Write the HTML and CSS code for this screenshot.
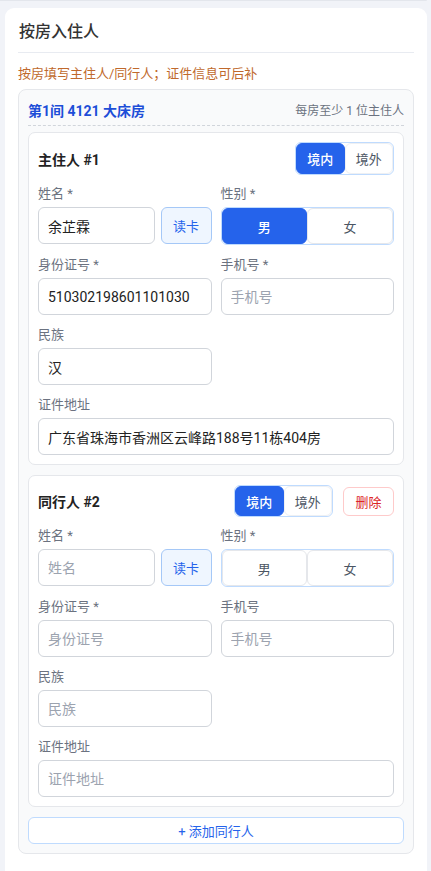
FILE: index.html
```html
<!DOCTYPE html>
<html lang="zh-CN">
<head>
<meta charset="utf-8">
<title>按房入住人</title>
<link rel="stylesheet" href="styles.css">
</head>
<body>
<div class="prev-edge"></div>
<section class="panel">
  <h2 class="panel-title">按房入住人</h2>
  <p class="note">按房填写主住人/同行人；证件信息可后补</p>

  <div class="room">
    <div class="room-head">
      <span class="room-name">第1间 4121 大床房</span>
      <span class="room-hint">每房至少 1 位主住人</span>
    </div>

    <div class="guest">
      <div class="guest-head">
        <span class="guest-title">主住人 #1</span>
        <div class="head-actions">
          <div class="seg seg-sm">
            <button class="seg-btn active">境内</button>
            <button class="seg-btn">境外</button>
          </div>
        </div>
      </div>
      <div class="grid">
        <div class="field">
          <label class="label">姓名 *</label>
          <div class="name-row">
            <input class="input" value="余芷霖">
            <button class="read-btn">读卡</button>
          </div>
        </div>
        <div class="field">
          <label class="label">性别 *</label>
          <div class="seg seg-lg">
            <button class="seg-btn active">男</button>
            <button class="seg-btn">女</button>
          </div>
        </div>
        <div class="field">
          <label class="label">身份证号 *</label>
          <input class="input" value="510302198601101030">
        </div>
        <div class="field">
          <label class="label">手机号 *</label>
          <input class="input" placeholder="手机号">
        </div>
        <div class="field">
          <label class="label">民族</label>
          <input class="input" value="汉">
        </div>
        <div class="field"></div>
        <div class="field span2">
          <label class="label">证件地址</label>
          <input class="input" value="广东省珠海市香洲区云峰路188号11栋404房">
        </div>
      </div>
    </div>

    <div class="guest">
      <div class="guest-head compact">
        <span class="guest-title">同行人 #2</span>
        <div class="head-actions">
          <div class="seg seg-sm">
            <button class="seg-btn active">境内</button>
            <button class="seg-btn">境外</button>
          </div>
          <button class="del-btn">删除</button>
        </div>
      </div>
      <div class="grid">
        <div class="field">
          <label class="label">姓名 *</label>
          <div class="name-row">
            <input class="input" placeholder="姓名">
            <button class="read-btn">读卡</button>
          </div>
        </div>
        <div class="field">
          <label class="label">性别 *</label>
          <div class="seg seg-lg">
            <button class="seg-btn">男</button>
            <button class="seg-btn">女</button>
          </div>
        </div>
        <div class="field">
          <label class="label">身份证号 *</label>
          <input class="input" placeholder="身份证号">
        </div>
        <div class="field">
          <label class="label">手机号</label>
          <input class="input" placeholder="手机号">
        </div>
        <div class="field">
          <label class="label">民族</label>
          <input class="input" placeholder="民族">
        </div>
        <div class="field"></div>
        <div class="field span2">
          <label class="label">证件地址</label>
          <input class="input" placeholder="证件地址">
        </div>
      </div>
    </div>

    <button class="add-btn">+ 添加同行人</button>
  </div>
</section>
</body>
</html>
```
FILE: styles.css
```css
* { box-sizing: border-box; }
html, body { margin: 0; }
body {
  background: #f1f3f8;
  font-family: Roboto, "Noto Sans CJK SC", sans-serif;
  color: #1f2937;
  padding: 0 4px 0 5px;
  height: 871px;
  overflow: hidden;
}
.prev-edge {
  height: 1px;
  margin-left: -5px;
  background: #e3e6ec;
  border-radius: 0 0 8px 0;
}
.panel {
  margin-top: 7px;
  background: #fff;
  border-radius: 9px;
  padding: 12px 13px 20px;
  min-height: 900px;
}
.panel-title {
  margin: 0;
  font-size: 16px;
  line-height: 24px;
  font-weight: 500;
  color: #333;
  padding: 0 0 8px 1px;
  border-bottom: 1px solid #e8ebf1;
}
.note {
  margin: 12px 0 6px;
  font-size: 13px;
  line-height: 18px;
  color: #c0692c;
}
.room {
  background: #f9fafb;
  border: 1px solid #e5e7eb;
  border-radius: 8px;
  padding: 11px 9px 9px;
}
.room-head {
  display: flex;
  justify-content: space-between;
  align-items: center;
  height: 25px;
  padding-bottom: 5px;
  border-bottom: 1px dashed #d1d5db;
  margin-bottom: 6px;
}
.room-name {
  font-size: 14px;
  font-weight: 700;
  color: #1d4ed8;
  line-height: 20px;
}
.room-hint {
  font-size: 12px;
  color: #6b7280;
  line-height: 20px;
}
.guest {
  background: #fff;
  border: 1px solid #e5e7eb;
  border-radius: 7px;
  padding: 9px;
  margin-bottom: 10px;
}
.guest-head {
  display: flex;
  justify-content: space-between;
  align-items: center;
  height: 33px;
  margin-bottom: 10px;
}
.guest-head.compact { height: 32px; }
.guest-title {
  font-size: 14px;
  font-weight: 700;
  color: #222;
}
.head-actions {
  display: flex;
  align-items: center;
  gap: 10px;
}
.seg {
  display: grid;
  grid-template-columns: 1fr 1fr;
  border: 1px solid #bfdbfe;
  border-radius: 6px;
  background: #fff;
}
.seg-sm { width: 99px; height: 33px; }
.compact .seg-sm { height: 32px; }
.seg-lg { height: 38px; }
.seg-btn {
  font-family: inherit;
  font-size: 13px;
  color: #4b5563;
  background: #fff;
  border: 1px solid #e5e7eb;
  border-radius: 6px;
  margin: 0;
  padding: 0;
  cursor: pointer;
}
.seg-sm .seg-btn { border-color: #eef0f3; }
.seg-btn.active {
  background: #2563eb;
  border-color: #2563eb;
  color: #fff;
  font-weight: 500;
}
.del-btn {
  font-family: inherit;
  width: 51px;
  height: 29px;
  font-size: 13px;
  color: #dc2626;
  background: #fff;
  border: 1px solid #fecaca;
  border-radius: 6px;
  padding: 0;
}
.grid {
  display: grid;
  grid-template-columns: 1fr 1fr;
  column-gap: 9px;
  row-gap: 11px;
  align-items: start;
}
.span2 { grid-column: 1 / span 2; }
.field {
  display: flex;
  flex-direction: column;
  gap: 4px;
}
.label {
  font-size: 13px;
  line-height: 18px;
  color: #6b7280;
}
.input {
  height: 37px;
  width: 100%;
  border: 1px solid #d1d5db;
  border-radius: 6px;
  padding: 0 9px;
  font-family: inherit;
  font-size: 14px;
  color: #222;
  background: #fff;
  outline: none;
}
.input::placeholder { color: #9ca3af; }
.name-row {
  display: flex;
  gap: 6px;
}
.name-row .input { flex: 1; min-width: 0; }
.read-btn {
  flex: 0 0 51px;
  height: 37px;
  font-family: inherit;
  font-size: 13px;
  color: #2563eb;
  background: #eff6ff;
  border: 1px solid #a5c8f7;
  border-radius: 6px;
  padding: 0;
}
.add-btn {
  display: block;
  width: 100%;
  height: 27px;
  margin: 0;
  font-family: inherit;
  font-size: 13px;
  color: #2563eb;
  background: #fff;
  border: 1px solid #bfdbfe;
  border-radius: 6px;
}
```
